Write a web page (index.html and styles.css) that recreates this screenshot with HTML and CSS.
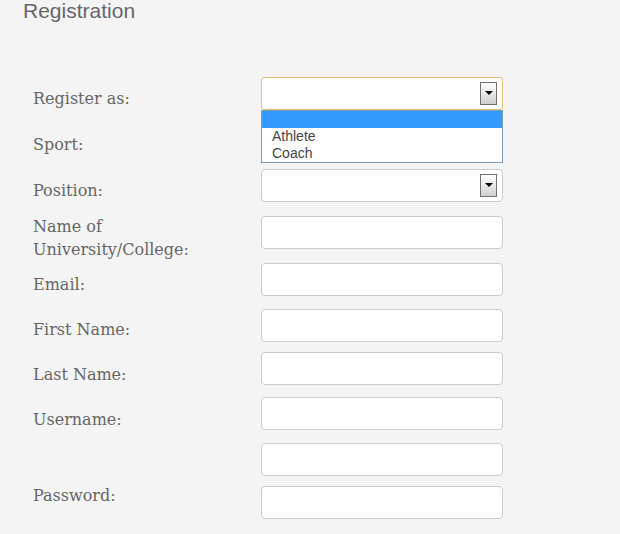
FILE: index.html
```html
<!DOCTYPE html>
<html>
<head>
<meta charset="utf-8">
<title>Registration</title>
<link rel="stylesheet" href="styles.css">
</head>
<body>
<div class="page">
  <h1 class="title">Registration</h1>
  <form class="form">
    <div class="row">
      <label class="lbl lbl-low">Register as:</label>
      <div class="ctrl select focused">
        <span class="btn"></span>
        <ul class="list">
          <li class="opt opt-sel"></li>
          <li class="opt">Athlete</li>
          <li class="opt">Coach</li>
        </ul>
      </div>
    </div>
    <div class="row">
      <label class="lbl lbl-mid">Sport:</label>
      <div class="ctrl select"><span class="btn"></span></div>
    </div>
    <div class="row">
      <label class="lbl lbl-mid">Position:</label>
      <div class="ctrl select"><span class="btn"></span></div>
    </div>
    <div class="row sp1">
      <label class="lbl lbl-top"><span class="wrap">Name of University/College:</span></label>
      <input class="ctrl" type="text">
    </div>
    <div class="row sp1">
      <label class="lbl lbl-mid">Email:</label>
      <input class="ctrl" type="text">
    </div>
    <div class="row">
      <label class="lbl">First Name:</label>
      <input class="ctrl" type="text">
    </div>
    <div class="row sm3">
      <label class="lbl lbl-low2">Last Name:</label>
      <input class="ctrl" type="text">
    </div>
    <div class="row sm1">
      <label class="lbl lbl-low2">Username:</label>
      <input class="ctrl" type="text">
    </div>
    <div class="row">
      <label class="lbl"></label>
      <input class="ctrl" type="text">
    </div>
    <div class="row sm3">
      <label class="lbl lbl-top2">Password:</label>
      <input class="ctrl" type="password">
    </div>
  </form>
</div>
</body>
</html>
```

FILE: styles.css
```css
html, body {
  margin: 0;
  padding: 0;
  background: #f4f4f4;
}

.page {
  width: 620px;
  height: 534px;
  overflow: hidden;
  background: #f4f4f4;
}

.title {
  margin: 0;
  padding-left: 23px;
  font-family: "Liberation Sans", Arial, sans-serif;
  font-weight: normal;
  font-size: 21px;
  line-height: 21px;
  color: #666666;
}

.form {
  margin: 56px 0 0 0;
  padding-left: 33px;
  display: flex;
  flex-direction: column;
  gap: 13px;
}

.row {
  display: flex;
  align-items: flex-start;
  height: 33px;
}

.sp1 { margin-top: 1px; }
.sm1 { margin-top: -1px; }
.sm3 { margin-top: -3px; }

.lbl {
  width: 228px;
  flex: none;
  padding-top: 9px;
  font-family: "DejaVu Serif", Georgia, serif;
  font-size: 16px;
  line-height: 23px;
  color: #666666;
}

.wrap {
  display: block;
  width: 190px;
}

.lbl-low { padding-top: 10px; }
.lbl-mid { padding-top: 10px; }
.lbl-low2 { padding-top: 11px; }
.lbl-top { padding-top: 0; margin-top: -1px; }
.lbl-top2 { padding-top: 0; margin-top: -2px; }

.ctrl {
  box-sizing: border-box;
  width: 242px;
  height: 33px;
  margin: 0;
  padding: 0 8px;
  background: #ffffff;
  border: 1px solid #cccccc;
  border-radius: 4px;
  flex: none;
  font-family: "Liberation Sans", Arial, sans-serif;
  font-size: 14px;
  outline: none;
}

.select {
  position: relative;
}

.focused {
  border-color: #e2bd72;
  border-radius: 3px;
}

.btn {
  position: absolute;
  right: 5px;
  top: 4px;
  box-sizing: border-box;
  width: 17px;
  height: 23px;
  border: 1px solid #707070;
  background: linear-gradient(#ffffff, #f0f0f0 35%, #cfcfcf);
  display: flex;
  align-items: center;
  justify-content: center;
}

.btn::after {
  content: "";
  width: 0;
  height: 0;
  border-left: 4px solid transparent;
  border-right: 4px solid transparent;
  border-top: 4px solid #000000;
  margin-top: -1px;
}

.list {
  position: absolute;
  left: -1px;
  top: 32px;
  z-index: 5;
  box-sizing: border-box;
  width: 242px;
  margin: 0;
  padding: 0;
  list-style: none;
  background: #ffffff;
  border: 1px solid #7f9db9;
  font-family: "Liberation Sans", Arial, sans-serif;
  font-size: 14px;
  line-height: 17px;
  color: #444444;
}

.opt {
  height: 17px;
  padding-left: 10px;
}

.opt-sel {
  background: #3399ff;
}
```
